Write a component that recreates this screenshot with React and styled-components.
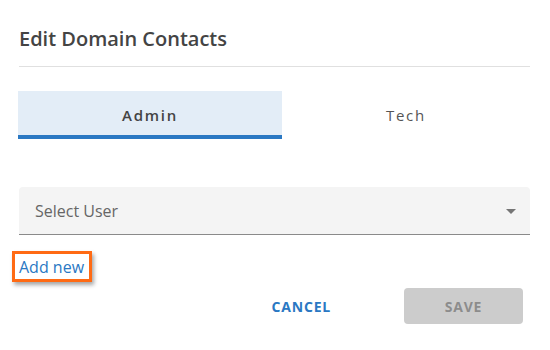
import React, { useState } from "react";
import styled, { createGlobalStyle } from "styled-components";

const GlobalStyle = createGlobalStyle`
  body {
    margin: 0;
    background: #fff;
    font-family: "Open Sans", "Noto Sans", sans-serif;
  }
`;

const Dialog = styled.div`
  width: 550px;
  height: 350px;
  box-sizing: border-box;
  padding: 26px 20px 0 19px;
  background: #fff;
`;

const Title = styled.h2`
  margin: 0;
  padding-bottom: 14px;
  border-bottom: 1px solid #e0e0e0;
  font-size: 20px;
  line-height: 26px;
  font-weight: 600;
  color: #444;
`;

const TabBar = styled.div`
  display: flex;
  margin-top: 24px;
  margin-left: -1px;
`;

const Tab = styled.button`
  flex: 1 1 auto;
  height: 48px;
  padding: 0 12px;
  border: 0;
  background: ${(p) => (p.$active ? "#e3edf7" : "transparent")};
  box-shadow: ${(p) => (p.$active ? "inset 0 -4px 0 #2a78c3" : "none")};
  font-family: inherit;
  font-size: 15px;
  font-weight: ${(p) => (p.$active ? 600 : 400)};
  letter-spacing: 1.7px;
  color: ${(p) => (p.$active ? "#444" : "#555")};
  cursor: pointer;
`;

const SelectBox = styled.div`
  display: flex;
  align-items: center;
  justify-content: space-between;
  height: 47px;
  margin-top: 48px;
  padding: 0 7px 0 16px;
  background: #f4f4f4;
  border-bottom: 1px solid #8a8a8a;
  border-radius: 4px 4px 0 0;
  font-size: 16px;
  color: #666;
  cursor: pointer;
`;

const Caret = styled.svg`
  width: 24px;
  height: 24px;
  fill: #757575;
`;

const LinkRow = styled.div`
  margin-top: 21px;
  line-height: 22px;
`;

const AddLink = styled.a`
  position: relative;
  font-size: 16px;
  color: #2a78c3;
  text-decoration: none;
  cursor: pointer;

  &::after {
    content: "";
    position: absolute;
    left: -7px;
    right: -8px;
    top: -5px;
    bottom: -4px;
    border: 3px solid #ff6a13;
    box-shadow: 2px 3px 4px rgba(0, 0, 0, 0.35);
    pointer-events: none;
  }
`;

const Actions = styled.div`
  display: flex;
  justify-content: flex-end;
  align-items: center;
  gap: 57px;
  margin-top: 10px;
  padding-right: 7px;
`;

const Button = styled.button`
  height: 36px;
  padding: 0 16px;
  border: 0;
  border-radius: 4px;
  font-family: inherit;
  font-size: 14px;
  font-weight: 700;
  letter-spacing: 0.8px;
  text-transform: uppercase;
  background: ${(p) => (p.$filled ? "#cccccc" : "transparent")};
  color: ${(p) => (p.$filled ? "#8c8c8c" : "#2a78c3")};
  width: ${(p) => (p.$filled ? "119px" : "auto")};
  cursor: pointer;
`;

export default function App() {
  const [tab, setTab] = useState("admin");

  return (
    <>
      <GlobalStyle />
      <Dialog>
        <Title>Edit Domain Contacts</Title>
        <TabBar>
          <Tab $active={tab === "admin"} onClick={() => setTab("admin")}>
            Admin
          </Tab>
          <Tab $active={tab === "tech"} onClick={() => setTab("tech")}>
            Tech
          </Tab>
        </TabBar>
        <SelectBox>
          <span>Select User</span>
          <Caret viewBox="0 0 24 24">
            <path d="M7 10l5 5 5-5z" />
          </Caret>
        </SelectBox>
        <LinkRow>
          <AddLink>Add new</AddLink>
        </LinkRow>
        <Actions>
          <Button>Cancel</Button>
          <Button $filled disabled>
            Save
          </Button>
        </Actions>
      </Dialog>
    </>
  );
}
